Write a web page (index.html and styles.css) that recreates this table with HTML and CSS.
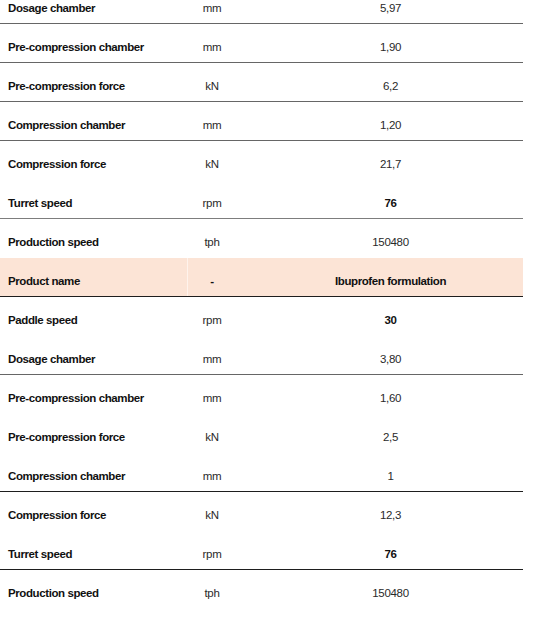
FILE: index.html
```html
<!DOCTYPE html>
<html>
<head>
<meta charset="utf-8">
<link rel="stylesheet" href="styles.css">
</head>
<body>
<div class="table">
  <div class="row first line-grey"><div class="c1">Dosage chamber</div><div class="c2">mm</div><div class="c3">5,97</div></div>
  <div class="row line-grey"><div class="c1">Pre-compression chamber</div><div class="c2">mm</div><div class="c3">1,90</div></div>
  <div class="row line-grey"><div class="c1">Pre-compression force</div><div class="c2">kN</div><div class="c3">6,2</div></div>
  <div class="row line-grey"><div class="c1">Compression chamber</div><div class="c2">mm</div><div class="c3">1,20</div></div>
  <div class="row"><div class="c1">Compression force</div><div class="c2">kN</div><div class="c3">21,7</div></div>
  <div class="row line-light"><div class="c1">Turret speed</div><div class="c2">rpm</div><div class="c3 strong">76</div></div>
  <div class="row"><div class="c1">Production speed</div><div class="c2">tph</div><div class="c3">150480</div></div>
  <div class="row head line-dark"><div class="c1">Product name</div><div class="c2 strong">-</div><div class="c3 strong">Ibuprofen formulation</div></div>
  <div class="row"><div class="c1">Paddle speed</div><div class="c2">rpm</div><div class="c3 strong">30</div></div>
  <div class="row line-grey"><div class="c1">Dosage chamber</div><div class="c2">mm</div><div class="c3">3,80</div></div>
  <div class="row"><div class="c1">Pre-compression chamber</div><div class="c2">mm</div><div class="c3">1,60</div></div>
  <div class="row"><div class="c1">Pre-compression force</div><div class="c2">kN</div><div class="c3">2,5</div></div>
  <div class="row line-dark"><div class="c1">Compression chamber</div><div class="c2">mm</div><div class="c3">1</div></div>
  <div class="row"><div class="c1">Compression force</div><div class="c2">kN</div><div class="c3">12,3</div></div>
  <div class="row line-dark"><div class="c1">Turret speed</div><div class="c2">rpm</div><div class="c3 strong">76</div></div>
  <div class="row"><div class="c1">Production speed</div><div class="c2">tph</div><div class="c3">150480</div></div>
</div>
</body>
</html>
```
FILE: styles.css
```css
html, body {
  margin: 0;
  padding: 0;
  background: #ffffff;
}
body {
  font-family: "Liberation Sans", Arial, sans-serif;
  font-size: 11.5px;
  line-height: 14px;
  color: #2a2a2a;
}
.table {
  width: 523px;
  display: flex;
  flex-direction: column;
}
.row {
  display: grid;
  grid-template-columns: 188px 48px 287px;
  height: 39px;
  box-sizing: border-box;
  border-bottom: 1px solid transparent;
}
.row > div {
  padding-top: 16px;
  white-space: nowrap;
}
.row.first {
  height: 24px;
}
.row.first > div {
  padding-top: 1px;
}
.c1 {
  padding-left: 8px;
  font-weight: bold;
  color: #111111;
  letter-spacing: -0.4px;
}
.c2 {
  text-align: center;
  letter-spacing: -0.3px;
}
.c3 {
  text-align: center;
  padding-left: 22px;
  letter-spacing: -0.3px;
}
.strong {
  font-weight: bold;
  color: #111111;
  letter-spacing: -0.4px;
}
.line-grey {
  border-bottom-color: #666666;
}
.line-light {
  border-bottom-color: #7d7d7d;
}
.line-dark {
  border-bottom-color: #1e1e1e;
}
.head {
  background: #fce4d6;
}
.head .c1 {
  border-right: 1px solid #fff3ec;
}
```
